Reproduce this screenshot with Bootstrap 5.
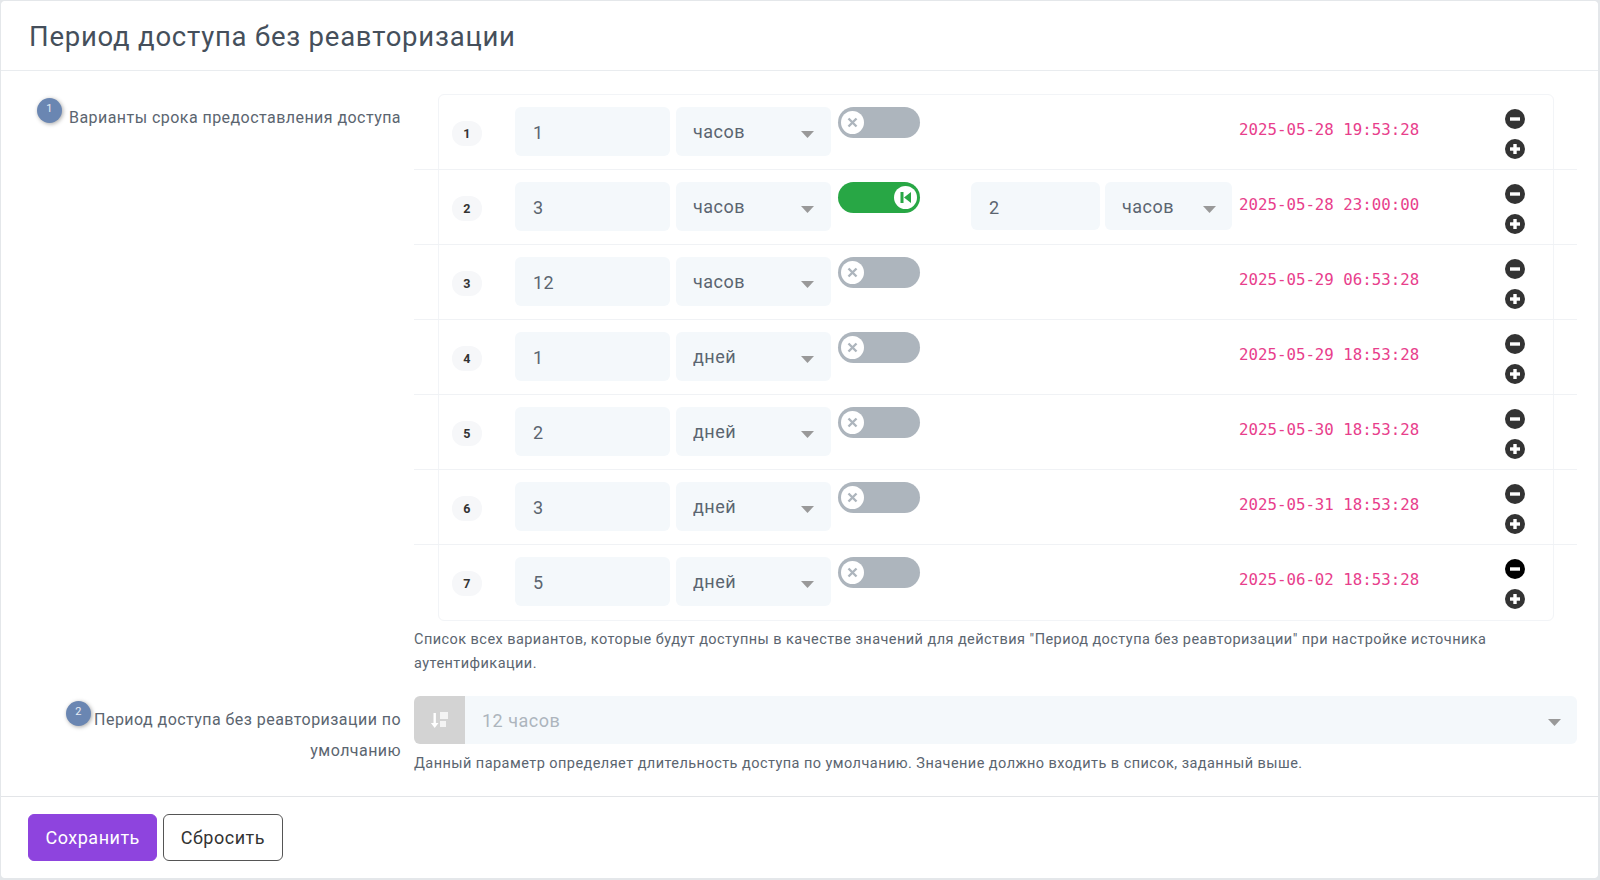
<!DOCTYPE html>
<html lang="ru">
<head>
    <meta charset="UTF-8">
    <title>Период доступа без реавторизации</title>
    <link rel="stylesheet" href="https://cdn.jsdelivr.net/npm/bootstrap@5.3.0/dist/css/bootstrap.min.css">
    <style>
        html, body { height: 100%; }
        body {
            background: #e4e7ea;
            font-family: "Roboto", "Liberation Sans", sans-serif;
            letter-spacing: .028em;
            color: #5b6570;
            overflow: hidden;
        }
        .page-wrap { padding: 1px 2px 2px 1px; height: 880px; }
        .page-card { height: 877px; border: 0; border-radius: 4px; }
        .page-card .card-header {
            height: 70px;
            flex: none;
            padding: 1px 28px 0;
            background: #fff;
            border-bottom: 1px solid #e9ecef;
            display: flex;
            align-items: center;
        }
        .page-title { font-size: 27.5px; font-weight: 400; letter-spacing: .028em; color: #454f5b; margin: 0; }
        .page-card .card-body { padding: 23px 21px 20px 0; }
        .page-card .card-footer {
            flex: none;
            background: #fff;
            border-top: 1px solid #e3e5e8;
            padding: 17px 28px 17px 27px;
        }

        .field-row { display: flex; }
        .field-label {
            width: 413px;
            flex: none;
            padding: 9px 13px 0 0;
            text-align: right;
            font-size: 16px;
            line-height: 30px;
        }
        .field-main { flex: 1; min-width: 0; }
        .hint-dot {
            display: inline-block;
            position: relative;
            top: -10px;
            width: 25px;
            height: 25px;
            margin-right: 3px;
            border-radius: 50%;
            background: #6a86b2;
            box-shadow: 1px 1px 4px rgba(0,0,0,.35);
            color: #e8edf5;
            font-size: 11px;
            line-height: 22px;
            text-align: center;
        }
        .hint-dot.dot-far { margin-right: 7px; top: -11px; }

        .opts-box { margin: 0 23px 0 24px; border: 1px solid #f2f4f7; border-radius: 6px; }
        .opt-row {
            height: 75px;
            margin: 0 -24px 0 -25px;
            padding-top: 12px;
            border-bottom: 1px solid #f0f2f5;
        }
        .opt-row:last-child { border-bottom: 0; }
        .opt-num {
            width: 30px;
            height: 25px;
            margin: 14px 33px 0 38px;
            border-radius: 12px;
            background: #f6f7f9;
            color: #333;
            font-size: 12.5px;
            font-weight: 700;
            line-height: 25px;
            text-align: center;
            flex: none;
        }
        .opt-input.form-control, .opt-select.form-select, .default-select.form-select {
            background-color: #f4f8fb;
            border: 0;
            border-radius: 6px;
            color: #5b6570;
            font-size: 18px;
            letter-spacing: .028em;
            height: 49px;
            box-shadow: none;
        }
        .opt-input.form-control { padding: 2px 18px 0; }
        .opt-select.form-select, .default-select.form-select {
            padding: 0 40px 0 17px;
            background-image: url("data:image/svg+xml,%3csvg xmlns='http://www.w3.org/2000/svg' viewBox='0 0 13 7'%3e%3cpath fill='%23999' d='M0 0h13L6.5 7z'/%3e%3c/svg%3e");
            background-size: 13px 7px;
            background-position: right 17px top 24px;
        }
        .w-main { width: 155px; flex: none; }
        .w-sub-in { width: 129px; flex: none; margin-left: 51px; }
        .w-sub-in.form-control { height: 48px; }
        .w-sub-sel { width: 127px; flex: none; margin-left: 5px; }
        .w-sub-sel.form-select { height: 48px; background-position: right 16px top 24px; }
        .ms-gap { margin-left: 6px; }

        .tgl {
            width: 82px;
            height: 31px;
            margin-left: 7px;
            border-radius: 16px;
            background: #adb5bd;
            flex: none;
            display: flex;
            align-items: center;
            padding: 0 3px;
        }
        .tgl-knob {
            width: 23px;
            height: 23px;
            border-radius: 50%;
            background: #fff;
            display: flex;
            align-items: center;
            justify-content: center;
        }
        .tgl-on { background: #28a745; justify-content: flex-end; }

        .opt-date {
            position: absolute;
            left: 825px;
            top: 23px;
            font-family: "DejaVu Sans Mono", "Liberation Mono", monospace;
            font-size: 15.75px;
            letter-spacing: 0;
            line-height: 24px;
            color: #e83e8c;
        }
        .opt-btns {
            position: absolute;
            left: 1091px;
            top: 14px;
            display: flex;
            flex-direction: column;
            gap: 10px;
        }
        .opt-btns svg { display: block; }

        .help-text { font-size: 14.5px; line-height: 24px; margin: 7px 0 0; }
        .default-group { margin-top: 20px; }
        .default-addon {
            width: 52px;
            background: #d3d3d3;
            border: 0;
            border-radius: 6px 0 0 6px;
            justify-content: center;
            padding: 0;
        }
        .default-select.form-select {
            height: 48px;
            color: #adb5bd;
            border-radius: 0 6px 6px 0;
            padding-left: 17px;
            background-position: right 16px top 23px;
        }
        .help-text.second { margin-top: 8px; }

        .btn-save, .btn-reset {
            height: 47px;
            font-size: 18px;
            letter-spacing: .028em;
            padding: 0 17px;
            border-radius: 6px;
            line-height: 45px;
        }
        .btn-save { background: #8e44de; border: 1px solid #8e44de; color: #fff; padding: 0 16.5px; }
        .btn-reset { background: #fff; border: 1px solid #555; color: #333; margin-left: 1px; }
    </style>
</head>
<body>
    <div class="page-wrap">
        <div class="card page-card">
            <div class="card-header">
                <h1 class="page-title">Период доступа без реавторизации</h1>
            </div>
            <div class="card-body">
                <div class="field-row">
                    <div class="field-label"><span class="hint-dot dot-far">1</span>Варианты срока предоставления доступа</div>
                    <div class="field-main">
                        <div class="opts-box" id="opts"></div>
                        <p class="help-text">Список всех вариантов, которые будут доступны в качестве значений для действия "Период доступа без реавторизации" при настройке источника аутентификации.</p>
                    </div>
                </div>
                <div class="field-row default-group">
                    <div class="field-label"><span class="hint-dot">2</span>Период доступа без реавторизации по умолчанию</div>
                    <div class="field-main">
                        <div class="input-group">
                            <span class="input-group-text default-addon">
                                <svg width="20" height="18" viewBox="0 0 20 18" fill="#fff"><path d="M3.5 2h2.4v10h2.6l-3.8 5-3.8-5h2.6z"/><path d="M10 1h8v7h-8z" opacity=".75"/><path d="M10 10h6v6h-6z" opacity=".75"/></svg>
                            </span>
                            <select class="form-select default-select" disabled><option>12 часов</option></select>
                        </div>
                        <p class="help-text second">Данный параметр определяет длительность доступа по умолчанию. Значение должно входить в список, заданный выше.</p>
                    </div>
                </div>
            </div>
            <div class="card-footer">
                <button type="button" class="btn btn-save">Сохранить</button>
                <button type="button" class="btn btn-reset">Сбросить</button>
            </div>
        </div>
    </div>

    <script>
        const variants = [
            ["1", "часов", "2025-05-28 19:53:28"],
            ["3", "часов", "2025-05-28 23:00:00", true],
            ["12", "часов", "2025-05-29 06:53:28"],
            ["1", "дней", "2025-05-29 18:53:28"],
            ["2", "дней", "2025-05-30 18:53:28"],
            ["3", "дней", "2025-05-31 18:53:28"],
            ["5", "дней", "2025-06-02 18:53:28"]
        ];

        const xIcon = `<svg width="11" height="11" viewBox="0 0 11 11"><path d="M1.5 1.5l8 8M9.5 1.5l-8 8" stroke="#adb5bd" stroke-width="2.4"/></svg>`;
        const backIcon = `<svg width="13" height="13" viewBox="0 0 13 13" fill="#28a745"><path d="M1.5 1h3v11h-3zM12 1v11L5 6.5z"/></svg>`;

        function roundBtn(sign, color) {
            let bar = sign == "+" ? `<path d="M10 5v10" stroke="#fff" stroke-width="3.4"/>` : "";
            return `<svg width="20" height="20" viewBox="0 0 20 20"><circle cx="10" cy="10" r="10" fill="${color}"/><path d="M5 10h10" stroke="#fff" stroke-width="3.4"/>${bar}</svg>`;
        }

        document.getElementById("opts").innerHTML = variants.map((v, i) => {
            let sub = v[3] ? `<input class="form-control opt-input w-sub-in" value="2">
                <select class="form-select opt-select w-sub-sel"><option>часов</option></select>` : "";
            return `<div class="opt-row d-flex align-items-start position-relative">
                <div class="opt-num">${i + 1}</div>
                <input class="form-control opt-input w-main" value="${v[0]}">
                <select class="form-select opt-select w-main ms-gap"><option>${v[1]}</option></select>
                <div class="tgl ${v[3] ? "tgl-on" : ""}"><span class="tgl-knob">${v[3] ? backIcon : xIcon}</span></div>
                ${sub}
                <div class="opt-date">${v[2]}</div>
                <div class="opt-btns">${roundBtn("-", i == 6 ? "#000" : "#333")}${roundBtn("+", "#333")}</div>
            </div>`;
        }).join("");
    </script>
    <script src="https://cdn.jsdelivr.net/npm/bootstrap@5.3.0/dist/js/bootstrap.bundle.min.js"></script>
</body>
</html>
